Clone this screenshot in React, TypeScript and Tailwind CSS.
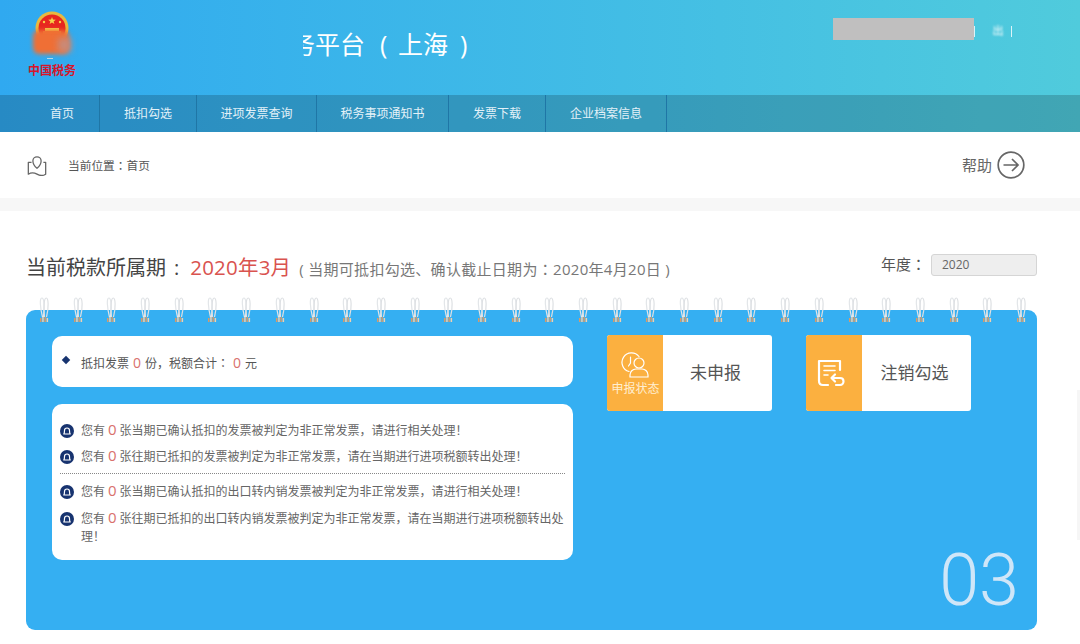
const navItems = [
  { label: "首页", width: "w-[100px] pl-[25px]" },
  { label: "抵扣勾选", width: "w-[97px]" },
  { label: "进项发票查询", width: "w-[120px]" },
  { label: "税务事项通知书", width: "w-[132px]" },
  { label: "发票下载", width: "w-[97px]" },
  { label: "企业档案信息", width: "w-[121px]" },
];

const notices = [
  ["张当期已确认抵扣的发票被判定为非正常发票，请进行相关处理！", "张往期已抵扣的发票被判定为非正常发票，请在当期进行进项税额转出处理！"],
  ["张当期已确认抵扣的出口转内销发票被判定为非正常发票，请进行相关处理！", "张往期已抵扣的出口转内销发票被判定为非正常发票，请在当期进行进项税额转出处理！"],
];

const rings = Array.from({ length: 30 }, (_, i) => i);

function Colon() {
  return <span className="[font-family:'Noto_Sans_CJK_TC',sans-serif]">：</span>;
}

function Emblem() {
  return (
    <div className="relative flex h-[80px] w-[65px] flex-col items-center">
      <svg viewBox="0 0 36 46" className="mt-[6px] h-[46px] w-[36px]">
        <circle cx="17" cy="17" r="16.500" fill="#e9b93f" />
        <circle cx="17" cy="17" r="13.500" fill="#e8261f" />
        <path d="M17 6l1 2.600 2.800.1-2.200 1.700.8 2.700-2.400-1.600-2.400 1.600.8-2.700-2.200-1.700 2.800-.1z" fill="#f6d24a" />
        <circle cx="9" cy="11" r="1.200" fill="#f6d24a" />
        <circle cx="25" cy="11" r="1.200" fill="#f6d24a" />
        <rect x="10" y="17" width="14" height="3" fill="#f6d24a" />
        <rect x="8" y="20" width="18" height="3" fill="#ee7a2c" />
      </svg>
      <div className="absolute top-[25px] left-[13px] h-[24px] w-[36px] rounded-md bg-[#ef6f35] blur-[2px]" />
      <div className="absolute top-[33px] left-[38px] h-[14px] w-[13px] bg-[#c98a78] blur-[3px]" />
      <div className="absolute top-[53px] left-[27px] h-px w-[6px] bg-[#b9d7e8]" />
      <span className="absolute top-[56px] left-[8px] text-[12px] leading-[18px] font-bold whitespace-nowrap text-[#d7162a] [font-family:'Noto_Sans_CJK_SC',serif]">中国税务</span>
    </div>
  );
}

function BellBadge() {
  return (
    <svg viewBox="0 0 14 14" className="h-[14px] w-[14px] shrink-0">
      <circle cx="7" cy="7" r="7" fill="#17336f" />
      <path d="M3.800 10c.7-1 .7-2 .7-3.500a2.500 2.500 0 0 1 5 0c0 1.500 0 2.500.7 3.500z" fill="none" stroke="#fff" strokeWidth="1.200" strokeLinejoin="round" />
    </svg>
  );
}

function NoticeRow({ text }: { text: string }) {
  return (
    <div className="flex items-start gap-[7px]">
      <div className="pt-[2px]">
        <BellBadge />
      </div>
      <p className="text-[12px] leading-[18px] text-[#666]">
        您有<span className="mx-[3px] text-[15px] leading-none text-[#d9706c]">0</span>
        {text}
      </p>
    </div>
  );
}

function Ring() {
  return (
    <svg viewBox="0 0 10 26" className="h-[26px] w-[10px] blur-[0.3px]">
      <path d="M3.500 20C1 10 .5 1 2.800 1s2.700 6 1.700 19" fill="none" stroke="#e2e5e8" strokeWidth="1.200" />
      <path d="M5.500 20C4.500 10 5 1 7.200 1S10 10 7.500 20" fill="none" stroke="#dde0e3" strokeWidth="1.200" />
      <rect x="1" y="21" width="1.500" height="4" fill="#d99a66" />
      <rect x="3.200" y="20" width="1.500" height="5" fill="#f0d0b0" />
      <rect x="5.400" y="20" width="1.500" height="5" fill="#d99a66" />
      <rect x="7.600" y="21" width="1.500" height="4" fill="#f0d0b0" />
    </svg>
  );
}

export default function App() {
  return (
    <div className="relative h-[644px] w-[1080px] overflow-hidden bg-white [font-family:'Open_Sans','Noto_Sans_CJK_SC',sans-serif]">
      {/* Header + nav share one gradient */}
      <div className="bg-gradient-to-r from-[#30a9f0] to-[#50cbdc]">
        <header className="flex h-[95px]">
          <div className="ml-[20px] w-[65px] pt-[5px]">
            <Emblem />
          </div>
          <div className="ml-[218px] flex h-[90px] items-center text-[25px] text-white">
            <span className="flex w-[12px] justify-end overflow-hidden">
              <span className="shrink-0">务</span>
            </span>
            <span>平台</span>
            <span className="ml-[15px] w-[18px]">(</span>
            <span>上海</span>
            <span className="ml-[12px]">)</span>
          </div>
          <div className="ml-[366px] flex h-[58px] items-center">
            <div className="h-[22px] w-[141px] bg-[#c0bfbf]" />
            <span className="mt-[4px] h-[11px] w-px bg-white/80" />
            <span className="mt-[4px] ml-[17px] text-[11px] text-white blur-[1px]">出</span>
            <span className="mt-[4px] ml-[8px] h-[11px] w-px bg-white/80" />
          </div>
        </header>
        <nav className="flex h-[37px] bg-black/[0.18]">
          {navItems.map((item) => (
            <div
              key={item.label}
              className={`flex h-full items-center justify-center border-r border-[#1f76a6] text-[12px] text-[#e3f1f8] ${item.width}`}
            >
              {item.label}
            </div>
          ))}
        </nav>
      </div>

      {/* Breadcrumb */}
      <div className="box-content flex h-[66px] items-center justify-between border-b-[13px] border-[#f7f7f7] pr-[55px] pl-[26px]">
        <div className="flex items-center">
          <svg viewBox="0 0 24 23" className="h-[21px] w-[22px]" fill="none" stroke="#666" strokeWidth="1.400" strokeLinejoin="round">
            <path d="M12 14.500c-3-2.500-4.500-5-4.500-8a4.500 4.500 0 0 1 9 0c0 3-1.500 5.500-4.500 8z" />
            <path d="M6 8H2.500v13c3-2 6-2 9.500 0 3.500 2 6.500 2 9.500 0V8H19" />
          </svg>
          <span className="ml-[20px] text-[11.700px] text-[#555]">当前位置<Colon />首页</span>
        </div>
        <div className="flex items-center gap-[5px]">
          <span className="text-[15px] text-[#666]">帮助</span>
          <svg viewBox="0 0 28 28" className="h-[28px] w-[28px]" fill="none" stroke="#666" strokeWidth="1.700">
            <circle cx="14" cy="14" r="12.800" />
            <path d="M6.500 14h14.500M15 8l6 6-6 6" />
          </svg>
        </div>
      </div>

      {/* Period title */}
      <main className="px-[26px] pt-[41px]">
        <div className="flex h-[58px] items-start justify-between pr-[17px]">
          <div className="flex items-baseline">
            <span className="text-[20px] leading-[30px] text-[#444]">当前税款所属期</span>
            <span className="ml-[8px] text-[20px] leading-[30px] text-[#444]">:</span>
            <span className="ml-[11px] text-[20.500px] leading-[30px] tracking-[0.2px] text-[#d9534f]">2020年3月</span>
            <span className="ml-[8px] text-[15px] tracking-[0.300px] text-[#777]">( 当期可抵扣勾选、确认截止日期为<Colon />2020年4月20日 )</span>
          </div>
          <div className="mt-[1px] flex items-start">
            <span className="text-[15px] leading-[22px] text-[#555]">年度<Colon /></span>
            <div className="mt-[1px] ml-[5px] flex h-[22px] w-[106px] items-center rounded-[3px] border border-[#d5d5d5] bg-[#eee] pl-[10px] text-[12px] text-[#666]">2020</div>
          </div>
        </div>

        {/* Calendar panel */}
        <section className="relative h-[320px] w-[1011px] rounded-[9px] bg-[#35aff2] pt-[26px] pl-[26px]">
          <div className="absolute -top-[13px] right-[11px] left-[13px] flex justify-between">
            {rings.map((i) => (
              <Ring key={i} />
            ))}
          </div>

          <div className="flex">
            <div className="w-[521px]">
              <div className="flex h-[51px] items-center rounded-[10px] bg-white pl-[11px]">
                <span className="mb-[4px] h-[6px] w-[6px] rotate-45 bg-[#17336f]" />
                <span className="mt-[1px] ml-[12px] text-[12px] text-[#555]">
                  抵扣发票<span className="mx-[4px] text-[14px] text-[#d9706c]">0</span>份，税额合计<Colon />
                  <span className="mx-[4px] text-[14px] text-[#d9706c]">0</span>元
                </span>
              </div>
              <div className="mt-[17px] h-[156px] rounded-[10px] bg-white pt-[18px] pr-[8px] pl-[8px]">
                <div className="flex flex-col gap-[8px]">
                  {notices[0].map((text) => (
                    <NoticeRow key={text} text={text} />
                  ))}
                </div>
                <div className="mt-[7px] mb-[9px] border-t border-dotted border-[#888]" />
                <div className="flex flex-col gap-[9px]">
                  {notices[1].map((text) => (
                    <NoticeRow key={text} text={text} />
                  ))}
                </div>
              </div>
            </div>

            <div className="-mt-[1px] ml-[34px] flex h-[76px] w-[165px] overflow-hidden rounded-[3px] bg-white">
              <div className="flex w-[56px] flex-col items-center bg-[#fbb040] pt-[17px]">
                <svg viewBox="0 0 28 26" className="h-[26px] w-[28px]" fill="none" stroke="#fff" strokeWidth="1.200" strokeLinecap="round">
                  <path d="M8 19.500a9.500 9.500 0 1 1 10-15" />
                  <path d="M9.500 5v6l-2 3" />
                  <circle cx="18" cy="11" r="5" />
                  <path d="M9 25v-2a6 6 0 0 1 6-6h6a6 6 0 0 1 6 6v2z" />
                </svg>
                <span className="mt-[2px] ml-[1px] text-[12px] whitespace-nowrap text-[#ffeed0]">申报状态</span>
              </div>
              <div className="flex flex-1 items-center justify-center pr-[4px] text-[17px] text-[#555]">未申报</div>
            </div>

            <div className="-mt-[1px] ml-[34px] flex h-[76px] w-[165px] overflow-hidden rounded-[3px] bg-white">
              <div className="flex w-[56px] items-center justify-center bg-[#fbb040]">
                <svg viewBox="0 0 28 28" className="mr-[6px] h-[28px] w-[28px]" fill="none" stroke="#fff" strokeWidth="2.200" strokeLinecap="round" strokeLinejoin="round">
                  <path d="M23 11V2H2v20c0 2.500 1.500 4 4 4h5" />
                  <path d="M7 7h11M7 11.500h11M7 16h4" strokeWidth="1.600" />
                  <path d="M18 15.500L14.500 19l3.500 3.500M14.500 19H23c2.300 0 3.500 1.500 3.500 3.300S25.300 26 23 26h-4" />
                </svg>
              </div>
              <div className="flex flex-1 items-center justify-center pr-[4px] text-[17px] text-[#555]">注销勾选</div>
            </div>
          </div>

          <span className="absolute right-[18px] bottom-[9px] text-[72px] leading-[80px] font-light text-[#cfe6f8] [font-family:Roboto,sans-serif]">03</span>
        </section>
      </main>

      {/* Collapsed side tab */}
      <div className="absolute top-[390px] right-0 h-[150px] w-[3px] bg-[#f6f6f6]" />
    </div>
  );
}
